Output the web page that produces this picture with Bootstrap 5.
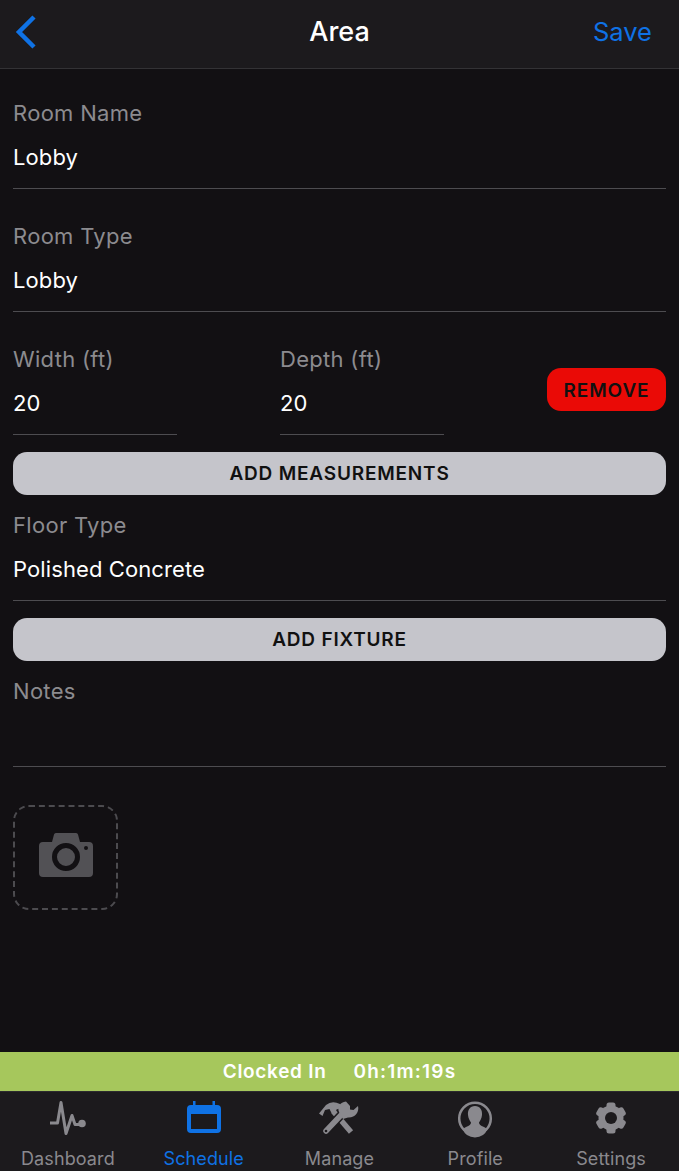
<!DOCTYPE html>
<html lang="en">
<head>
    <meta charset="UTF-8">
    <meta name="viewport" content="width=device-width, initial-scale=1.0">
    <title>Area</title>
    <link href="https://cdn.jsdelivr.net/npm/bootstrap@5.3.0/dist/css/bootstrap.min.css" rel="stylesheet">
    <style>
    html, body {
        height: 100%;
    }
    body {
        background-color: #121013;
        color: #fff;
        font-family: Inter, "Liberation Sans", sans-serif;
    }
    .screen {
        height: 1171px;
        overflow: hidden;
    }
    .top-bar {
        height: 69px;
        background: #1c1a1d;
        border-bottom: 1px solid #333235;
        padding: 0 27px 5px 14px;
    }
    .top-title {
        font-size: 27px;
        font-weight: 500;
        left: 0;
        right: 0;
        top: 15px;
        line-height: 34px;
    }
    .top-save {
        font-size: 25.5px;
        color: #0f72e5;
        line-height: 34px;
    }
    .form-area {
        padding: 29px 13px 0;
    }
    .field-label {
        color: #8c8b8f;
        font-size: 22px;
        line-height: 30px;
        letter-spacing: .3px;
    }
    .field-value {
        font-size: 22px;
        line-height: 30px;
        height: 30px;
        margin-top: 14px;
        letter-spacing: .1px;
    }
    .field-box {
        border-bottom: 1px solid #4d4c50;
        padding-bottom: 16px;
    }
    .field-gap {
        margin-top: 32px;
    }
    .size-box {
        width: 164px;
    }
    .size-second {
        margin-left: 103px;
    }
    .btn-remove {
        background: #ea0a06;
        color: #111;
        border: 0;
        width: 119px;
        height: 43px;
        border-radius: 14px;
        font-size: 19px;
        font-weight: 600;
        letter-spacing: .9px;
        padding: 3px 0 0;
        margin-bottom: 24px;
    }
    .btn-wide {
        background: #c5c5cb;
        color: #111;
        border: 0;
        height: 43px;
        border-radius: 14px;
        font-size: 19px;
        font-weight: 600;
        letter-spacing: .8px;
        padding: 2px 0 0;
    }
    .after-wide {
        margin-top: 15px;
    }
    .before-wide {
        margin-top: 17px;
    }
    .photo-box {
        width: 105px;
        height: 105px;
        margin-top: 38px;
        border: 2px dashed #4c4b4f;
        border-radius: 16px;
    }
    .photo-box svg {
        margin-bottom: 6px;
    }
    .clock-bar {
        height: 39px;
        background: #a6c75c;
        font-size: 19px;
        font-weight: 600;
        letter-spacing: .7px;
        gap: 27px;
        margin-top: auto;
        padding-top: 2px;
    }
    .clock-time {
        letter-spacing: 1.2px;
    }
    .tab-bar {
        height: 80px;
        background: #1c1a1d;
        border-top: 1px solid #2c2b2e;
    }
    .tab-item {
        width: 136px;
        color: #8a898e;
        font-size: 18px;
        line-height: 22px;
        letter-spacing: .1px;
        padding-top: 9px;
    }
    .tab-item svg {
        height: 36px;
        width: 36px;
        margin-bottom: 11px;
        overflow: visible;
    }
    .tab-on {
        color: #0f72e5;
    }
    </style>
</head>
<body>

    <div class="screen d-flex flex-column">
        <div class="top-bar position-relative d-flex align-items-center justify-content-between">
            <svg width="24" height="36" viewBox="0 0 24 36"><path d="M20 3 5 18l15 15" fill="none" stroke="#0f72e5" stroke-width="4.5"/></svg>
            <div class="top-title position-absolute text-center">Area</div>
            <div class="top-save">Save</div>
        </div>

        <div class="form-area">
            <div class="field-box">
                <div class="field-label">Room Name</div>
                <div class="field-value">Lobby</div>
            </div>
            <div class="field-box field-gap">
                <div class="field-label">Room Type</div>
                <div class="field-value">Lobby</div>
            </div>
            <div class="d-flex align-items-end field-gap">
                <div class="field-box size-box">
                    <div class="field-label">Width (ft)</div>
                    <div class="field-value">20</div>
                </div>
                <div class="field-box size-box size-second">
                    <div class="field-label">Depth (ft)</div>
                    <div class="field-value">20</div>
                </div>
                <button type="button" class="btn btn-remove ms-auto">REMOVE</button>
            </div>
            <button type="button" class="btn btn-wide w-100 d-block before-wide">ADD MEASUREMENTS</button>
            <div class="field-box after-wide">
                <div class="field-label">Floor Type</div>
                <div class="field-value">Polished Concrete</div>
            </div>
            <button type="button" class="btn btn-wide w-100 d-block before-wide">ADD FIXTURE</button>
            <div class="field-box after-wide">
                <div class="field-label">Notes</div>
                <div class="field-value"></div>
            </div>
            <div class="photo-box d-flex align-items-center justify-content-center">
                <svg width="56" height="46" viewBox="0 0 56 46">
                    <path fill="#525155" fill-rule="evenodd" d="M18 1h20a2 2 0 0 1 2 1.500L42 10h9a4 4 0 0 1 4 4v27a4 4 0 0 1-4 4H5a4 4 0 0 1-4-4V14a4 4 0 0 1 4-4h9l2-7.500A2 2 0 0 1 18 1ZM28 11a14 14 0 1 0 0 28 14 14 0 0 0 0-28Zm0 5a9 9 0 1 1 0 18 9 9 0 0 1 0-18Zm20-2a2 2 0 1 0 0 4 2 2 0 0 0 0-4Z"/>
                </svg>
            </div>
        </div>

        <div class="clock-bar d-flex align-items-center justify-content-center flex-shrink-0">
            <span>Clocked In</span>
            <span class="clock-time">0h:1m:19s</span>
        </div>

        <div class="tab-bar d-flex flex-shrink-0">
            <div class="tab-item text-center">
                <svg class="d-block mx-auto" viewBox="0 0 36 36"><path d="M0 22h7.500L11 1.500 16 32.500l6-18 3 9h6" fill="none" stroke="currentColor" stroke-width="3" stroke-linejoin="round"/><circle cx="32" cy="22.500" r="3.800" fill="currentColor"/></svg>
                <div>Dashboard</div>
            </div>
            <div class="tab-item tab-on text-center">
                <svg class="d-block mx-auto" viewBox="0 0 36 36"><path fill="currentColor" fill-rule="evenodd" d="M7 0h2.500v4h17V0H29v4h2a4 4 0 0 1 4 4v20a4 4 0 0 1-4 4H5a4 4 0 0 1-4-4V8a4 4 0 0 1 4-4h2V0ZM5 13v15h26V13H5Z"/></svg>
                <div>Schedule</div>
            </div>
            <div class="tab-item text-center">
                <svg class="d-block mx-auto" viewBox="0 0 36 36">
                    <path fill="currentColor" d="M-2 12.500 5 4Q11-1 19 3L20 7 15.500 8.500 14 13 10 11 8.500 8 4 9 1.500 15Z"/>
                    <path d="M12 10 30 31" fill="none" stroke="currentColor" stroke-width="5.500"/>
                    <path d="M21 13 5 30" fill="none" stroke="#1c1a1d" stroke-width="8.500"/>
                    <path d="M22 12 5 30" fill="none" stroke="currentColor" stroke-width="5.500" stroke-linecap="round"/>
                    <path fill="currentColor" d="M25 .5 29 5V8.500L32.500 9 37 5C38.500 11 34 17 27 16.500L22 18 18 11C16 6 19 1 25 .5Z"/>
                    <circle cx="5" cy="30" r="1.300" fill="#1c1a1d"/>
                </svg>
                <div>Manage</div>
            </div>
            <div class="tab-item text-center">
                <svg class="d-block mx-auto" viewBox="0 0 36 36"><circle cx="18" cy="17.500" r="15.800" fill="none" stroke="currentColor" stroke-width="2.500"/><path fill="currentColor" d="M18 5c5 0 7.500 4 7 9-.3 3.500-2 6-3 7.500 0 2 1.500 3 5 4.500l3.500 2a13.500 13.500 0 0 1-25 0l3.500-2c3.500-1.500 5-2.500 5-4.500-1-1.500-2.700-4-3-7.500-.5-5 2-9 7-9Z"/></svg>
                <div>Profile</div>
            </div>
            <div class="tab-item text-center">
                <svg class="d-block mx-auto" viewBox="0 0 36 36">
                    <g transform="translate(18 17)" fill="currentColor">
                        <circle r="12.500"/>
                        <rect x="-4.500" y="-15.500" width="9" height="7" rx="2.500"/>
                        <rect x="-4.500" y="-15.500" width="9" height="7" rx="2.500" transform="rotate(60)"/>
                        <rect x="-4.500" y="-15.500" width="9" height="7" rx="2.500" transform="rotate(120)"/>
                        <rect x="-4.500" y="-15.500" width="9" height="7" rx="2.500" transform="rotate(180)"/>
                        <rect x="-4.500" y="-15.500" width="9" height="7" rx="2.500" transform="rotate(240)"/>
                        <rect x="-4.500" y="-15.500" width="9" height="7" rx="2.500" transform="rotate(300)"/>
                        <circle r="6" fill="#1c1a1d"/>
                    </g>
                </svg>
                <div>Settings</div>
            </div>
        </div>
    </div>

    <script src="https://cdn.jsdelivr.net/npm/bootstrap@5.3.0/dist/js/bootstrap.bundle.min.js"></script>
</body>
</html>
